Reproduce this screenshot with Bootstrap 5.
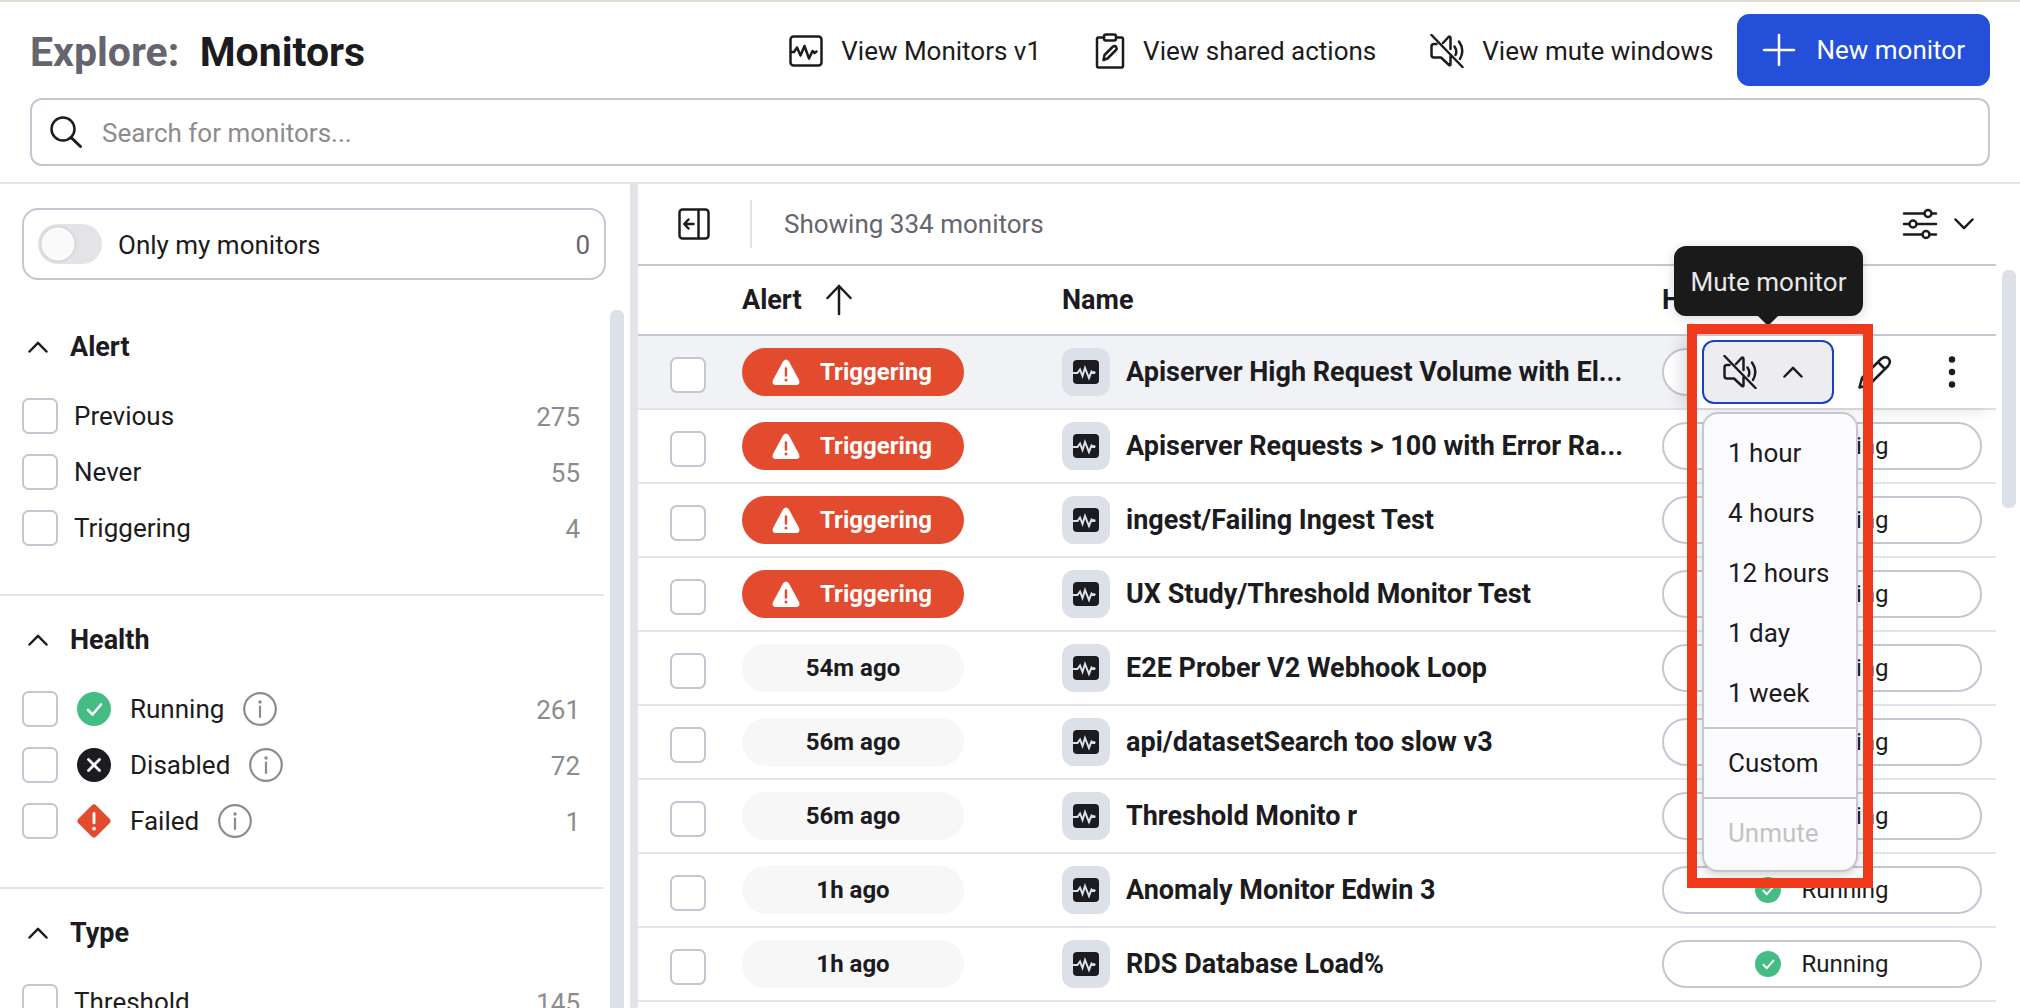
<!DOCTYPE html>
<html lang="en">
<head>
<meta charset="utf-8">
<meta name="viewport" content="width=device-width, initial-scale=1">
<title>Explore: Monitors</title>
<link rel="stylesheet" href="https://cdn.jsdelivr.net/npm/bootstrap@5.3.0/dist/css/bootstrap.min.css">
<style>
:root { --ink:#1c1b20; --muted-ink:#66656f; --soft-ink:#8c8c8c; --edge:#c6c5d1; --line:#e3e3e8; --thumb:#dce1e9; --red:#e34b2f; }
body { font-family: Roboto, "Noto Sans", sans-serif; font-size: 26px; line-height: 36px; color: var(--ink); background: #fff; }
svg { flex: none; display: block; }
a { color: inherit; text-decoration: none; }
.ln { fill: none; stroke: currentColor; stroke-width: 2.5; stroke-linecap: round; stroke-linejoin: round; }
.app-shell { border-top: 2px solid #dedfd3; }
.top-head { padding: 12px 30px 16px; border-bottom: 2px solid var(--line); }
.page-title { font-size: 41px; line-height: 48px; padding-top: 3px; }
.page-title span { color: var(--muted-ink); }
.head-links { gap: 54px; padding-top: 2px; }
.head-links a { gap: 18px; }
.btn-new { --bs-btn-bg:#2450d9; --bs-btn-border-color:#2450d9; --bs-btn-color:#fff; --bs-btn-border-radius:12px; height: 72px; gap: 20px; padding: 0 24px; font-size: 26px; }
.search-box { height: 68px; border: 2px solid var(--edge); border-radius: 12px; padding: 0 18px; gap: 20px; }
.search-box input { font-size: 26px; padding: 2px 0 0; border: 0; color: var(--ink); background: none; }
.search-box input::placeholder { color: var(--soft-ink); }
.side-pane { flex: 0 0 630px; }
.mine-box { margin: 24px 24px 0 22px; height: 72px; border: 2px solid var(--edge); border-radius: 16px; padding: 0 14px; }
.mine-box .form-check-input { width: 64px; height: 40px; margin: 0; border: 0; border-radius: 20px; background: radial-gradient(circle at 20px 20px, #fafafa 16px, #d6d6db 17px, #e3e3e8 20px); }
.mine-box label, .mine-box span { padding-top: 2px; }
.filter-list { padding-top: 23px; overflow: hidden; }
.filter-group { padding: 0 24px 38px 22px; border-bottom: 2px solid var(--line); }
.group-head { height: 85px; padding: 2px 6px 0; gap: 22px; border: 0; background: none; font-size: 27px; font-weight: 700; color: inherit; }
.filter-line { height: 56px; gap: 16px; }
.filter-line .tally { color: var(--soft-ink); margin-left: auto; padding-top: 2px; }
.filter-line label { display: flex; align-items: center; gap: 19px; line-height: 38px; }
.filter-line.with-state { gap: 19px; }
.tick { width: 36px; height: 36px; margin: 0; border: 2px solid var(--edge); border-radius: 8px; flex: none; }
.info-icon { color: var(--soft-ink); }
.scroll-thumb { width: 14px; border-radius: 6px; background: var(--thumb); flex: none; }
.side-thumb { margin: 30px 6px 0 6px; border-radius: 6px 6px 0 0; }
.pane-split { width: 8px; background: var(--line); flex: none; }
.tool-bar { height: 82px; padding: 0 22px 0 40px; border-bottom: 2px solid var(--edge); }
.tool-sep { width: 2px; height: 48px; margin: 0 32px 0 40px; background: var(--line); }
.tool-count { color: var(--muted-ink); }
.icon-btn { border: 0; padding: 0; background: none; color: inherit; }
.monitor-table { table-layout: fixed; border-collapse: separate; border-spacing: 0; margin: 0; --bs-table-bg: transparent; color: inherit; }
.monitor-table > :not(caption) > * > * { padding: 0; height: 74px; vertical-align: middle; border-bottom: 2px solid var(--line); color: inherit; font-size: 27px; }
.monitor-table > thead > tr > th { height: 70px; border-color: var(--edge); }
.monitor-table td { font-weight: 700; white-space: nowrap; }
.monitor-table tr.is-hover > td { background: #f1f2f6; }
.c-tick { width: 104px; } .c-alert { width: 320px; } .c-health { width: 334px; }
.monitor-table td .tick { display: block; margin: 6px 0 0 32px; background-color: #fff; }
.alert-pill { width: 222px; height: 48px; border-radius: 24px; background: #f7f7f8; display: flex; align-items: center; justify-content: center; font-size: 24px; }
.alert-pill.firing { background: var(--red); color: #fff; gap: 20px; padding-right: 2px; }
.kind-icon { width: 48px; height: 48px; border-radius: 12px; background: var(--thumb); }
.name-cell { display: flex; align-items: center; gap: 16px; }
.state-pill { width: 320px; height: 48px; border: 2px solid var(--edge); border-radius: 24px; background: #fff; display: flex; align-items: center; justify-content: center; gap: 20px; font-weight: 400; font-size: 24px; }
.row-actions { top: 0; right: 0; bottom: 0; left: 28px; background: #fff; z-index: 3; padding: 0 0 0 12px; box-shadow: -8px 0 16px rgba(0,0,0,.14); clip-path: inset(0 0 -700px -30px); }
.btn-mute { width: 132px; height: 64px; border: 2px solid #1a42c0; border-radius: 12px; background: #ededf0; color: inherit; gap: 26px; padding: 0 0 0 19px; margin-right: 24px; }
.edit-btn { margin-right: 56px; }
.mute-menu { top: 76px; left: 12px; width: 156px; min-width: 0; margin: 0; padding: 9px 0 7px; border: 2px solid var(--edge); border-radius: 16px; background: #fcfcff; box-shadow: 0 4px 8px rgba(0,0,0,.16); font-size: 26px; z-index: 1; }
.mute-menu .dropdown-item { height: 60px; padding: 0 24px; line-height: 60px; color: var(--ink); }
.mute-menu .dropdown-item.disabled { color: #c3c3c3; }
.mute-menu .dropdown-divider { margin: 4px 0; border-top: 2px solid var(--edge); opacity: 1; }
.tip-layer { top: 0; left: 28px; z-index: 4; pointer-events: none; }
.mark-frame { left: -3px; top: -12px; width: 186px; height: 564px; border: 10px solid #f0391b; }
.tip-box { left: -16px; top: -90px; width: 189px; height: 70px; border-radius: 12px; background: #1a1a1a; color: #e8e8e8; font-size: 26px; font-weight: 400; line-height: 72px; text-align: center; box-shadow: 0 2px 12px rgba(0,0,0,.16); }
.tip-box::after { content: ""; position: absolute; top: 100%; left: 84px; border: 10px solid transparent; border-top-color: #1a1a1a; border-bottom: 0; }
.table-thumb { height: 238px; margin: 86px 4px 0 6px; }
</style>
<script src="https://cdn.jsdelivr.net/npm/bootstrap@5.3.0/dist/js/bootstrap.bundle.min.js"></script>
</head>
<body>
<svg width="0" height="0" class="position-absolute" aria-hidden="true">
  <symbol id="i-mute" viewBox="0 0 34 34"><g class="ln"><path d="M1.500 1 32.500 33M6.500 10H4Q1.500 10 1.500 12.500V21Q1.500 23.500 4 23.500H11L19 31Q20.500 32 20.500 30V22M13 9 18.500 3Q20.500 1.500 20.500 4.500V15M24.500 12.500Q27.500 17 25.500 21M29 7.500Q35 16 30 25"/></g></symbol>
  <symbol id="i-up" viewBox="0 0 20 12"><path class="ln" d="M1.500 10.500 10 1.800 18.500 10.500"/></symbol>
  <symbol id="i-down" viewBox="0 0 20 12"><path class="ln" d="M1.500 1.500 10 10.200 18.500 1.500"/></symbol>
  <symbol id="i-kind" viewBox="0 0 28 24"><rect x="1" width="26" height="24" rx="4" fill="#1c1b20"/><path d="M1 13H5.500L8 9.500 10.500 16 13 8 17 18 19.500 11.500 21 13H23" fill="none" stroke="#dce1e9" stroke-width="2"/><circle cx="22" cy="12.500" r="1.600" fill="#dce1e9"/></symbol>
  <symbol id="i-warn" viewBox="0 0 28 26"><path d="M11 2.500Q14-1.500 17 2.500L27 21Q28.500 25.500 24.500 26H3.500Q-.5 25.500 1 21Z" fill="#fff"/><path d="M14 9.500V16.500" stroke="#e34b2f" stroke-width="2.400" stroke-linecap="round"/><circle cx="14" cy="21" r="1.500" fill="#e34b2f"/></symbol>
  <symbol id="i-ok" viewBox="0 0 34 34"><circle cx="17" cy="17" r="17" fill="#44bd84"/><path d="M11 18 15.500 22.500 24 12.500" fill="none" stroke="#fff" stroke-width="2.600" stroke-linecap="round" stroke-linejoin="round"/></symbol>
  <symbol id="i-off" viewBox="0 0 34 34"><circle cx="17" cy="17" r="17" fill="#1c1b20"/><path d="M11.500 11.500 22.500 22.500M22.500 11.500 11.500 22.500" stroke="#fff" stroke-width="2.800" stroke-linecap="round"/></symbol>
  <symbol id="i-fail" viewBox="0 0 36 36"><path d="M15.500 1.500Q18-.8 20.500 1.500L34.500 15.500Q36.800 18 34.500 20.500L20.500 34.500Q18 36.800 15.500 34.500L1.500 20.500Q-.8 18 1.500 15.500Z" fill="#e34b2f"/><path d="M18 10V20" stroke="#fff" stroke-width="3" stroke-linecap="round"/><circle cx="18" cy="26" r="2" fill="#fff"/></symbol>
  <symbol id="i-info" viewBox="0 0 34 34"><circle cx="17" cy="17" r="15.800" fill="none" stroke="currentColor" stroke-width="2.200"/><path d="M17 14.500V25" stroke="currentColor" stroke-width="2.200" stroke-linecap="round"/><circle cx="17" cy="10" r="1.700" fill="currentColor"/></symbol>
</svg>

<div class="app-shell vh-100 d-flex flex-column overflow-hidden">
  <header class="top-head">
    <div class="d-flex align-items-center justify-content-between mb-2 pb-1">
      <h1 class="page-title fw-bold m-0"><span>Explore:</span>&nbsp; Monitors</h1>
      <div class="d-flex align-items-center gap-4">
        <nav class="head-links d-flex" aria-label="Monitor tools">
          <a href="#" class="d-flex align-items-center"><svg width="34" height="32" viewBox="0 0 34 32"><g class="ln"><rect x="1.500" y="1.500" width="31" height="29" rx="3"/><path d="M2 17H5L8 12.500 11.500 20.500 15.500 11 20 23.500 23.500 16 25.500 18 27.500 16.500"/></g></svg>View Monitors v1</a>
          <a href="#" class="d-flex align-items-center"><svg width="30" height="36" viewBox="0 0 30 36"><g class="ln"><path d="M9 4.500H3.500Q2 4.500 2 6V33Q2 34.500 3.500 34.500H26.500Q28 34.500 28 33V6Q28 4.500 26.500 4.500H21"/><rect x="9" y="1.500" width="12" height="6" rx="2"/><path d="M8.500 27 9.500 22 18 13.500Q20 12.500 21.200 14 22.300 15.500 21 17L12.500 25.500Z"/></g></svg>View shared actions</a>
          <a href="#" class="d-flex align-items-center"><svg width="34" height="34"><use href="#i-mute"/></svg>View mute windows</a>
        </nav>
        <button type="button" class="btn btn-new d-flex align-items-center"><svg width="34" height="34" viewBox="0 0 34 34"><path class="ln" d="M17 2V32M2 17H32"/></svg>New monitor</button>
      </div>
    </div>
    <div class="search-box d-flex align-items-center">
      <svg width="32" height="32" viewBox="0 0 32 32"><g class="ln"><circle cx="13" cy="13" r="11.500"/><path d="M21 21.500 30.500 30.500" stroke-width="3"/></g></svg>
      <input type="text" class="w-100" placeholder="Search for monitors..." aria-label="Search for monitors">
    </div>
  </header>

  <div class="d-flex flex-grow-1 overflow-hidden">
    <aside class="side-pane d-flex flex-column overflow-hidden">
      <div class="mine-box d-flex align-items-center flex-shrink-0">
        <input class="form-check-input" type="checkbox" role="switch" id="mine">
        <label for="mine" class="ms-3">Only my monitors</label>
        <span class="ms-auto tool-count">0</span>
      </div>
      <div class="d-flex flex-grow-1 overflow-hidden">
        <div class="filter-list flex-grow-1">
          <section class="filter-group">
            <button type="button" class="group-head d-flex align-items-center"><svg width="20" height="12"><use href="#i-up"/></svg>Alert</button>
            <div class="filter-line d-flex align-items-center"><input class="form-check-input tick" type="checkbox" id="f1"><label for="f1">Previous</label><span class="tally">275</span></div>
            <div class="filter-line d-flex align-items-center"><input class="form-check-input tick" type="checkbox" id="f2"><label for="f2">Never</label><span class="tally">55</span></div>
            <div class="filter-line d-flex align-items-center"><input class="form-check-input tick" type="checkbox" id="f3"><label for="f3">Triggering</label><span class="tally">4</span></div>
          </section>
          <section class="filter-group">
            <button type="button" class="group-head d-flex align-items-center"><svg width="20" height="12"><use href="#i-up"/></svg>Health</button>
            <div class="filter-line with-state d-flex align-items-center"><input class="form-check-input tick" type="checkbox" id="f4"><label for="f4"><svg width="34" height="34"><use href="#i-ok"/></svg>Running</label><svg class="info-icon" width="34" height="34"><use href="#i-info"/></svg><span class="tally">261</span></div>
            <div class="filter-line with-state d-flex align-items-center"><input class="form-check-input tick" type="checkbox" id="f5"><label for="f5"><svg width="34" height="34"><use href="#i-off"/></svg>Disabled</label><svg class="info-icon" width="34" height="34"><use href="#i-info"/></svg><span class="tally">72</span></div>
            <div class="filter-line with-state d-flex align-items-center"><input class="form-check-input tick" type="checkbox" id="f6"><label for="f6"><svg width="34" height="36"><use href="#i-fail"/></svg>Failed</label><svg class="info-icon" width="34" height="34"><use href="#i-info"/></svg><span class="tally">1</span></div>
          </section>
          <section class="filter-group">
            <button type="button" class="group-head d-flex align-items-center"><svg width="20" height="12"><use href="#i-up"/></svg>Type</button>
            <div class="filter-line d-flex align-items-center"><input class="form-check-input tick" type="checkbox" id="f7"><label for="f7">Threshold</label><span class="tally">145</span></div>
          </section>
        </div>
        <div class="scroll-thumb side-thumb"></div>
      </div>
    </aside>
    <div class="pane-split"></div>

    <main class="flex-grow-1 overflow-hidden">
      <div class="tool-bar d-flex align-items-center">
        <button type="button" class="icon-btn" aria-label="Collapse filters"><svg width="32" height="32" viewBox="0 0 32 32"><g class="ln"><rect x="1.500" y="1.500" width="29" height="29" rx="3"/><path d="M20.500 2V30M15.500 16H6.500M10.500 11.500 6.200 16 10.500 20.500"/></g></svg></button>
        <div class="tool-sep"></div>
        <span class="tool-count">Showing 334 monitors</span>
        <button type="button" class="icon-btn ms-auto d-flex align-items-center gap-3" aria-label="Column settings">
          <svg width="36" height="32" viewBox="0 0 36 32"><g class="ln"><path d="M2 5.500H22M30 5.500H34M2 16H7M15 16H34M2 26.500H20M28 26.500H34"/><circle cx="26" cy="5.500" r="3.500"/><circle cx="11" cy="16" r="3.500"/><circle cx="24" cy="26.500" r="3.500"/></g></svg>
          <svg width="20" height="12"><use href="#i-down"/></svg>
        </button>
      </div>
      <table class="table monitor-table">
        <thead>
          <tr>
            <th class="c-tick" aria-label="Select"></th>
            <th class="c-alert"><div class="d-flex align-items-center gap-4">Alert<svg width="26" height="32" viewBox="0 0 26 32"><path class="ln" d="M13 30V2M1.500 14 13 2 24.500 14"/></svg></div></th>
            <th>Name</th>
            <th class="c-health">Health</th>
          </tr>
        </thead>
        <tbody>
          <tr class="is-hover">
            <td><input class="form-check-input tick" type="checkbox" aria-label="Select row 1"></td>
            <td><span class="alert-pill firing"><svg width="28" height="26"><use href="#i-warn"/></svg>Triggering</span></td>
            <td><div class="name-cell"><span class="kind-icon d-flex align-items-center justify-content-center"><svg width="28" height="24"><use href="#i-kind"/></svg></span>Apiserver High Request Volume with El...</div></td>
            <td class="position-relative">
              <div class="state-pill"></div>
              <div class="row-actions position-absolute d-flex align-items-center">
                <button type="button" class="btn-mute d-flex align-items-center" aria-expanded="true" aria-label="Mute monitor"><svg width="34" height="34"><use href="#i-mute"/></svg><svg width="20" height="12"><use href="#i-up"/></svg></button>
                <button type="button" class="icon-btn edit-btn" aria-label="Edit"><svg width="34" height="34" viewBox="0 0 34 34"><path class="ln" d="M1.500 32.500 4 23 23 4Q27 .5 30.500 3.500 33.500 7 30 11L11 30ZM20 7 27 14M4 23 11 30"/></svg></button>
                <button type="button" class="icon-btn" aria-label="More"><svg width="8" height="32" viewBox="0 0 8 32"><g fill="currentColor"><circle cx="4" cy="3.500" r="3.200"/><circle cx="4" cy="16" r="3.200"/><circle cx="4" cy="28.500" r="3.200"/></g></svg></button>
                <ul class="dropdown-menu mute-menu show">
                  <li><a class="dropdown-item" href="#">1 hour</a></li>
                  <li><a class="dropdown-item" href="#">4 hours</a></li>
                  <li><a class="dropdown-item" href="#">12 hours</a></li>
                  <li><a class="dropdown-item" href="#">1 day</a></li>
                  <li><a class="dropdown-item" href="#">1 week</a></li>
                  <li><hr class="dropdown-divider"></li>
                  <li><a class="dropdown-item" href="#">Custom</a></li>
                  <li><hr class="dropdown-divider"></li>
                  <li><a class="dropdown-item disabled" href="#">Unmute</a></li>
                </ul>
              </div>
              <div class="tip-layer position-absolute">
                <div class="tip-box position-absolute" role="tooltip">Mute monitor</div>
                <div class="mark-frame position-absolute"></div>
              </div>
            </td>
          </tr>
          <tr>
            <td><input class="form-check-input tick" type="checkbox" aria-label="Select row 2"></td>
            <td><span class="alert-pill firing"><svg width="28" height="26"><use href="#i-warn"/></svg>Triggering</span></td>
            <td><div class="name-cell"><span class="kind-icon d-flex align-items-center justify-content-center"><svg width="28" height="24"><use href="#i-kind"/></svg></span>Apiserver Requests &gt; 100 with Error Ra...</div></td>
            <td><div class="state-pill"><svg width="26" height="26"><use href="#i-ok"/></svg>Running</div></td>
          </tr>
          <tr>
            <td><input class="form-check-input tick" type="checkbox" aria-label="Select row 3"></td>
            <td><span class="alert-pill firing"><svg width="28" height="26"><use href="#i-warn"/></svg>Triggering</span></td>
            <td><div class="name-cell"><span class="kind-icon d-flex align-items-center justify-content-center"><svg width="28" height="24"><use href="#i-kind"/></svg></span>ingest/Failing Ingest Test</div></td>
            <td><div class="state-pill"><svg width="26" height="26"><use href="#i-ok"/></svg>Running</div></td>
          </tr>
          <tr>
            <td><input class="form-check-input tick" type="checkbox" aria-label="Select row 4"></td>
            <td><span class="alert-pill firing"><svg width="28" height="26"><use href="#i-warn"/></svg>Triggering</span></td>
            <td><div class="name-cell"><span class="kind-icon d-flex align-items-center justify-content-center"><svg width="28" height="24"><use href="#i-kind"/></svg></span>UX Study/Threshold Monitor Test</div></td>
            <td><div class="state-pill"><svg width="26" height="26"><use href="#i-ok"/></svg>Running</div></td>
          </tr>
          <tr>
            <td><input class="form-check-input tick" type="checkbox" aria-label="Select row 5"></td>
            <td><span class="alert-pill">54m ago</span></td>
            <td><div class="name-cell"><span class="kind-icon d-flex align-items-center justify-content-center"><svg width="28" height="24"><use href="#i-kind"/></svg></span>E2E Prober V2 Webhook Loop</div></td>
            <td><div class="state-pill"><svg width="26" height="26"><use href="#i-ok"/></svg>Running</div></td>
          </tr>
          <tr>
            <td><input class="form-check-input tick" type="checkbox" aria-label="Select row 6"></td>
            <td><span class="alert-pill">56m ago</span></td>
            <td><div class="name-cell"><span class="kind-icon d-flex align-items-center justify-content-center"><svg width="28" height="24"><use href="#i-kind"/></svg></span>api/datasetSearch too slow v3</div></td>
            <td><div class="state-pill"><svg width="26" height="26"><use href="#i-ok"/></svg>Running</div></td>
          </tr>
          <tr>
            <td><input class="form-check-input tick" type="checkbox" aria-label="Select row 7"></td>
            <td><span class="alert-pill">56m ago</span></td>
            <td><div class="name-cell"><span class="kind-icon d-flex align-items-center justify-content-center"><svg width="28" height="24"><use href="#i-kind"/></svg></span>Threshold Monito r</div></td>
            <td><div class="state-pill"><svg width="26" height="26"><use href="#i-ok"/></svg>Running</div></td>
          </tr>
          <tr>
            <td><input class="form-check-input tick" type="checkbox" aria-label="Select row 8"></td>
            <td><span class="alert-pill">1h ago</span></td>
            <td><div class="name-cell"><span class="kind-icon d-flex align-items-center justify-content-center"><svg width="28" height="24"><use href="#i-kind"/></svg></span>Anomaly Monitor Edwin 3</div></td>
            <td><div class="state-pill"><svg width="26" height="26"><use href="#i-ok"/></svg>Running</div></td>
          </tr>
          <tr>
            <td><input class="form-check-input tick" type="checkbox" aria-label="Select row 9"></td>
            <td><span class="alert-pill">1h ago</span></td>
            <td><div class="name-cell"><span class="kind-icon d-flex align-items-center justify-content-center"><svg width="28" height="24"><use href="#i-kind"/></svg></span>RDS Database Load%</div></td>
            <td><div class="state-pill"><svg width="26" height="26"><use href="#i-ok"/></svg>Running</div></td>
          </tr>
        </tbody>
      </table>
    </main>
    <div class="scroll-thumb table-thumb"></div>
  </div>
</div>
</body>
</html>
